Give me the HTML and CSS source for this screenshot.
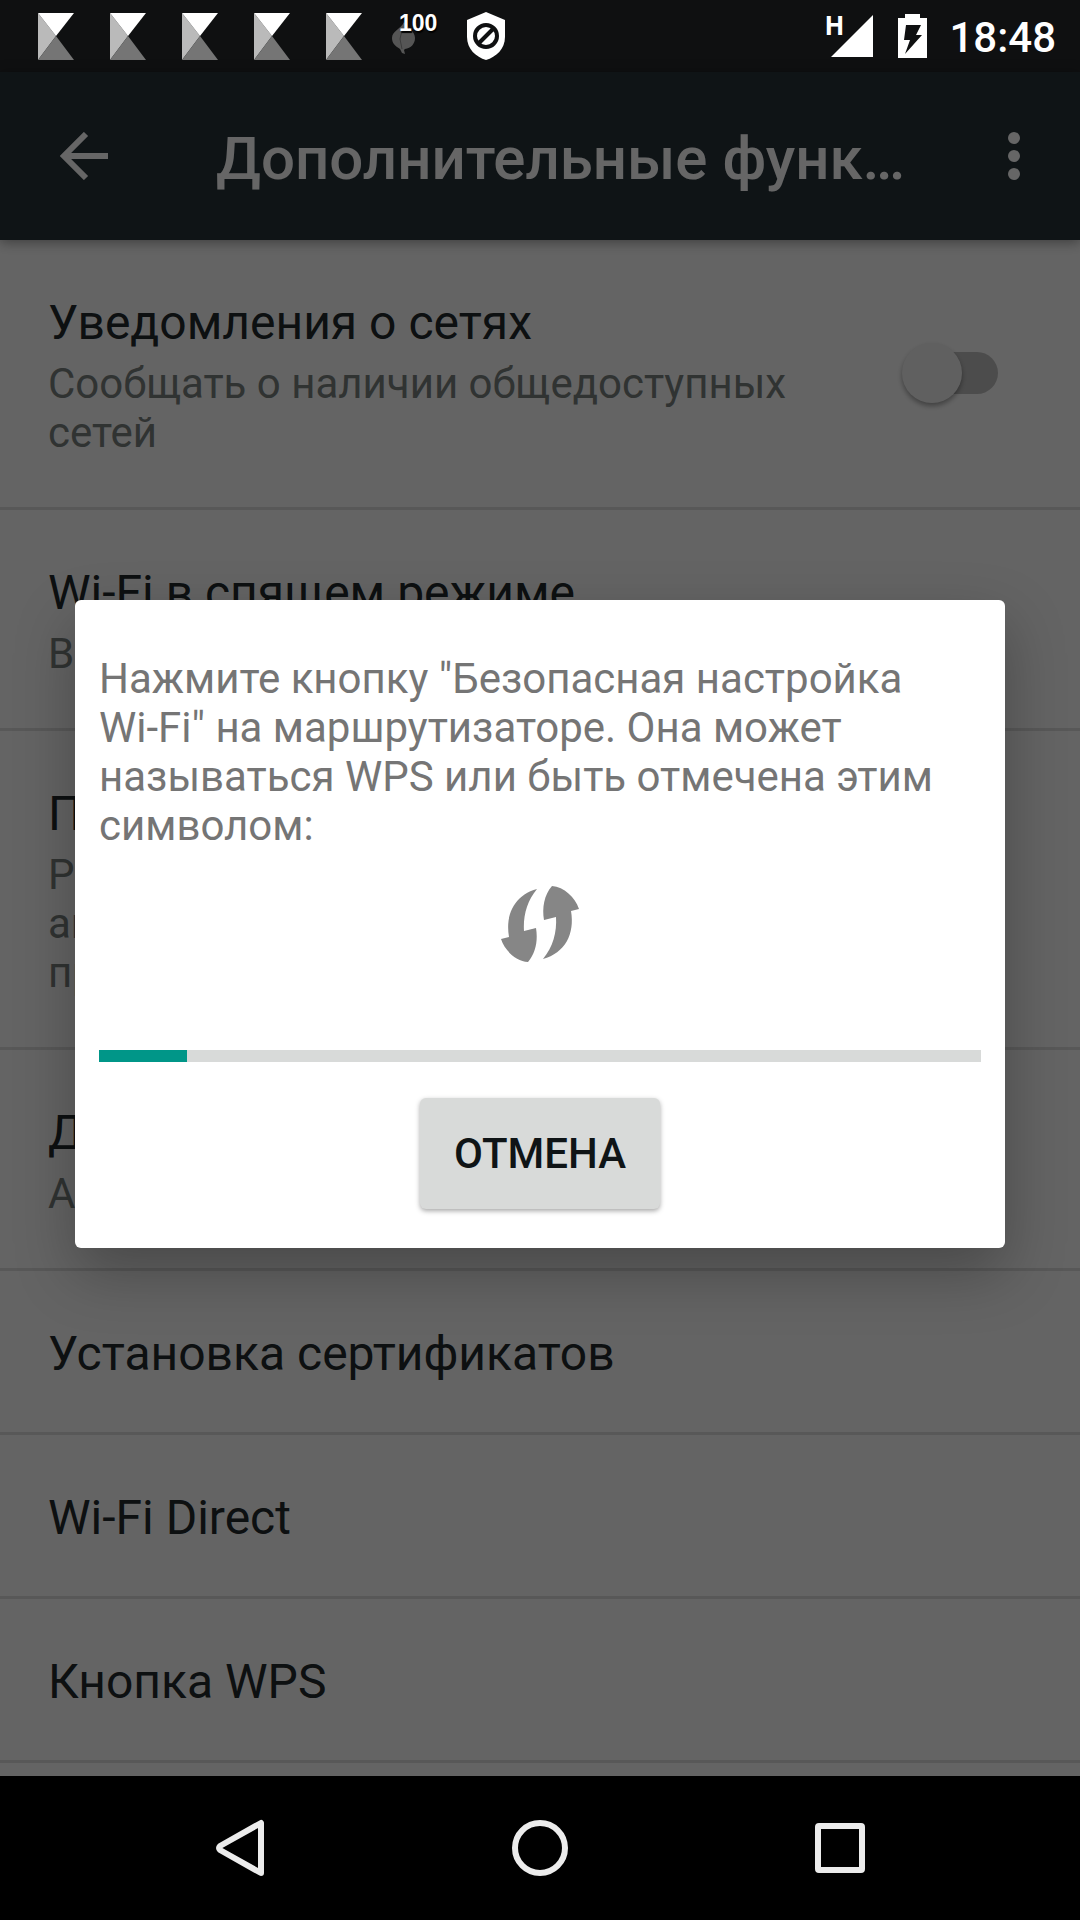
FILE: index.html
```html
<!DOCTYPE html>
<html lang="ru">
<head>
    <meta charset="UTF-8">
    <meta name="viewport" content="width=device-width, initial-scale=1">
    <title>Дополнительные функции</title>
    <link rel="stylesheet" href="styles.css">
</head>
<body>
    <svg class="sprite" width="0" height="0">
        <symbol id="k-icon" viewBox="0 0 36 47">
            <path fill="#bababa" d="M0 0L18 23 0 47z"/>
            <path fill="#fff" d="M0 0H36L18 23z"/>
            <path fill="#757575" d="M18 23L36 47H0z"/>
        </symbol>
    </svg>

    <header class="status-bar">
        <div class="notifications">
            <svg width="36" height="47"><use href="#k-icon"/></svg>
            <svg width="36" height="47"><use href="#k-icon"/></svg>
            <svg width="36" height="47"><use href="#k-icon"/></svg>
            <svg width="36" height="47"><use href="#k-icon"/></svg>
            <svg width="36" height="47"><use href="#k-icon"/></svg>
            <div class="leaf">
                <svg width="24" height="32" viewBox="0 0 24 32">
                    <path fill="#555" d="M12 0c3 5 11 9 11 16 0 6-4 10-10 11l-1 1 1 4-3-1-2-4C3 24 0 21 0 16 0 9 9 7 12 0z"/>
                    <path fill="none" stroke="#3c3c3c" d="M10 8L8 17l2 10"/>
                </svg>
                <span class="leaf-count">100</span>
            </div>
            <svg width="38" height="48" viewBox="0 0 38 48">
                <path fill="#fff" d="M19 0l19 8v17c0 12-9 20-19 23C9 45 0 37 0 25V8z"/>
                <circle cx="19" cy="24" r="11" fill="none" stroke="#0f1011" stroke-width="4"/>
                <path stroke="#0f1011" stroke-width="4" d="M12 31L26 17"/>
            </svg>
        </div>
        <div class="system-icons">
            <div class="signal">
                <span class="network">H</span>
                <svg width="42" height="42" viewBox="0 0 42 42"><path fill="#fff" d="M42 0v42H0z"/></svg>
            </div>
            <svg width="29" height="44" viewBox="0 0 29 44">
                <path fill="#fff" d="M7 0h15v4h7v40H0V4h7z"/>
                <path fill="#0f1011" d="M8 11h15l-5 10h6L7 40l5-14H6z"/>
            </svg>
            <time class="clock">18:48</time>
        </div>
    </header>

    <div class="window">
        <div class="app-bar">
            <button class="bar-btn back" aria-label="Назад">
                <svg width="48" height="48" viewBox="0 0 48 48">
                    <path fill="none" stroke="#fff" stroke-width="6" d="M48 24H5M26 2L4 24l22 22"/>
                </svg>
            </button>
            <h1>Дополнительные функции</h1>
            <button class="bar-btn menu" aria-label="Меню">
                <svg width="12" height="48" viewBox="0 0 12 48" fill="#fff">
                    <circle cx="6" cy="6" r="6"/>
                    <circle cx="6" cy="24" r="6"/>
                    <circle cx="6" cy="42" r="6"/>
                </svg>
            </button>
        </div>

        <ul class="settings">
            <li class="with-switch">
                <label for="notify">
                    <span class="title">Уведомления о сетях</span>
                    <span class="summary">Сообщать о наличии общедоступных сетей</span>
                </label>
                <input type="checkbox" id="notify" class="switch">
            </li>
            <li>
                <span class="title">Wi-Fi в спящем режиме</span>
                <span class="summary">Всегда</span>
            </li>
            <li>
                <span class="title">Поиск сетей всегда</span>
                <span class="summary">Разрешить поиск сетей Wi-Fi<br>активным службам и другим<br>приложениям</span>
            </li>
            <li>
                <span class="title">Диапазон частот Wi-Fi</span>
                <span class="summary">Автоматически</span>
            </li>
            <li><span class="title">Установка сертификатов</span></li>
            <li><span class="title">Wi-Fi Direct</span></li>
            <li><span class="title">Кнопка WPS</span></li>
        </ul>

        <div class="scrim">
            <div class="dialog" role="dialog" aria-labelledby="wps-text">
                <p id="wps-text">Нажмите кнопку "Безопасная настройка <span class="nowrap">Wi-Fi"</span> на маршрутизаторе. Она может называться WPS или быть отмечена этим символом:</p>
                <svg class="wps" width="78" height="76" viewBox="0 0 78 76" fill="#868686">
                    <path d="M36 3C26 15 22 30 23 45l12-3c2 12 0 25-8 34C15 75 4 65 0 53l8-2C4 28 14 9 36 3z"/>
                    <path d="M42 73c10-12 14-27 13-42l-12 3C41 22 43 9 51 0c12 1 23 11 27 23l-8 2C74 48 64 67 42 73z"/>
                </svg>
                <progress value="10" max="100" aria-label="Ожидание"></progress>
                <button class="cancel">ОТМЕНА</button>
            </div>
        </div>
    </div>

    <nav class="nav-bar">
        <button aria-label="Назад">
            <svg width="60" height="60" viewBox="0 0 60 60"><path d="M51 5v50L10 32q-2-2 0-4z"/></svg>
        </button>
        <button aria-label="Домой">
            <svg width="60" height="60" viewBox="0 0 60 60"><circle cx="30" cy="30" r="25"/></svg>
        </button>
        <button aria-label="Недавние">
            <svg width="60" height="60" viewBox="0 0 60 60"><rect x="8" y="8" width="44" height="44" rx="1"/></svg>
        </button>
    </nav>
</body>
</html>
```
FILE: styles.css
```css
* {
    box-sizing: border-box;
}
body {
    margin: 0;
    min-height: 100vh;
    display: flex;
    flex-direction: column;
    background: #000;
    font-family: Roboto, "Noto Sans", sans-serif;
}
svg {
    display: block;
    flex: none;
}
button {
    border: none;
    background: none;
    padding: 0;
    font-family: inherit;
    cursor: pointer;
}
.sprite {
    position: absolute;
}
.nowrap {
    white-space: nowrap;
}

/* status bar */
.status-bar {
    height: 72px;
    display: flex;
    align-items: center;
    justify-content: space-between;
    padding: 0 24px 0 38px;
    background: #0f1011;
    color: #fff;
}
.notifications {
    display: flex;
    align-items: center;
    gap: 36px;
}
.leaf {
    position: relative;
    margin-left: -6px;
    padding: 4px 15px 0 0;
}
.leaf-count {
    position: absolute;
    left: 7px;
    top: -8px;
    font: bold 23px/27px "Liberation Sans", Arial, sans-serif;
    text-shadow: 1px 2px 1px #000;
}
.system-icons {
    display: flex;
    align-items: center;
    gap: 22px;
}
.signal {
    position: relative;
    margin-right: 3px;
}
.network {
    position: absolute;
    left: -7px;
    top: -5px;
    font: bold 26px/30px "Liberation Sans Narrow", "Open Sans", sans-serif;
}
.clock {
    padding-top: 2px;
    font-size: 42px;
    line-height: 49px;
    font-weight: 500;
}

/* settings window */
.window {
    position: relative;
    flex: 1;
    background: #fafafa;
}
.app-bar {
    position: relative;
    height: 168px;
    display: flex;
    align-items: center;
    background: #263238;
    box-shadow: 0 2px 12px rgba(0, 0, 0, 0.4);
}
.bar-btn {
    height: 168px;
    display: flex;
    align-items: center;
    justify-content: center;
}
.back {
    width: 168px;
}
.menu {
    width: 132px;
}
.app-bar h1 {
    flex: 1;
    min-width: 0;
    margin: 0 18px 0 48px;
    padding-top: 6px;
    font-size: 60px;
    line-height: 72px;
    font-weight: 500;
    color: #fff;
    white-space: nowrap;
    overflow: hidden;
    text-overflow: ellipsis;
}
.settings {
    list-style: none;
    margin: 0;
    padding: 0;
}
.settings li {
    padding: 55px 48px 50px;
    border-bottom: 3px solid #dcdcdc;
}
.title,
.summary {
    display: block;
}
.title {
    font-size: 48px;
    line-height: 56px;
    color: #22282b;
}
.summary {
    margin-top: 8px;
    font-size: 42px;
    line-height: 49px;
    color: #78807e;
}
.settings .with-switch {
    display: flex;
    padding-right: 82px;
}
.with-switch label {
    flex: 1;
    margin-right: 96px;
}
.switch {
    appearance: none;
    position: relative;
    align-self: center;
    flex: none;
    width: 84px;
    height: 42px;
    margin: 0 0 6px;
    border-radius: 21px;
    background: #bebebe;
}
.switch::before {
    content: "";
    position: absolute;
    left: -12px;
    top: -9px;
    width: 60px;
    height: 60px;
    border-radius: 50%;
    background: #f1f1f1;
    box-shadow: 0 3px 5px rgba(0, 0, 0, 0.35);
}

/* dialog */
.scrim {
    position: absolute;
    inset: 0;
    display: flex;
    align-items: center;
    padding: 0 75px;
    background: rgba(0, 0, 0, 0.6);
}
.dialog {
    flex: 1;
    display: flex;
    flex-direction: column;
    align-items: center;
    padding: 54px 24px 39px;
    border-radius: 6px;
    background: #fff;
    box-shadow: 0 24px 60px rgba(0, 0, 0, 0.28);
}
.dialog p {
    width: 100%;
    margin: 0;
    font-size: 42px;
    line-height: 49px;
    color: #757575;
}
.wps {
    margin: 36px 0 88px;
}
.dialog progress {
    appearance: none;
    width: 100%;
    height: 12px;
    border: none;
    background: #d8dad9;
}
.dialog progress::-webkit-progress-bar {
    background: #d8dad9;
}
.dialog progress::-webkit-progress-value {
    background: #009688;
}
.cancel {
    width: 240px;
    height: 111px;
    margin-top: 36px;
    border-radius: 6px;
    background: #d8dad9;
    box-shadow: 0 2px 5px rgba(0, 0, 0, 0.35);
    font-size: 42px;
    line-height: 49px;
    font-weight: 500;
    color: #0f1416;
}

/* navigation bar */
.nav-bar {
    height: 144px;
    display: flex;
    padding: 0 90px;
    background: #000;
}
.nav-bar button {
    flex: 1;
    display: flex;
    align-items: center;
    justify-content: center;
}
.nav-bar svg {
    fill: none;
    stroke: #ececec;
    stroke-width: 6;
    stroke-linejoin: round;
}
```
